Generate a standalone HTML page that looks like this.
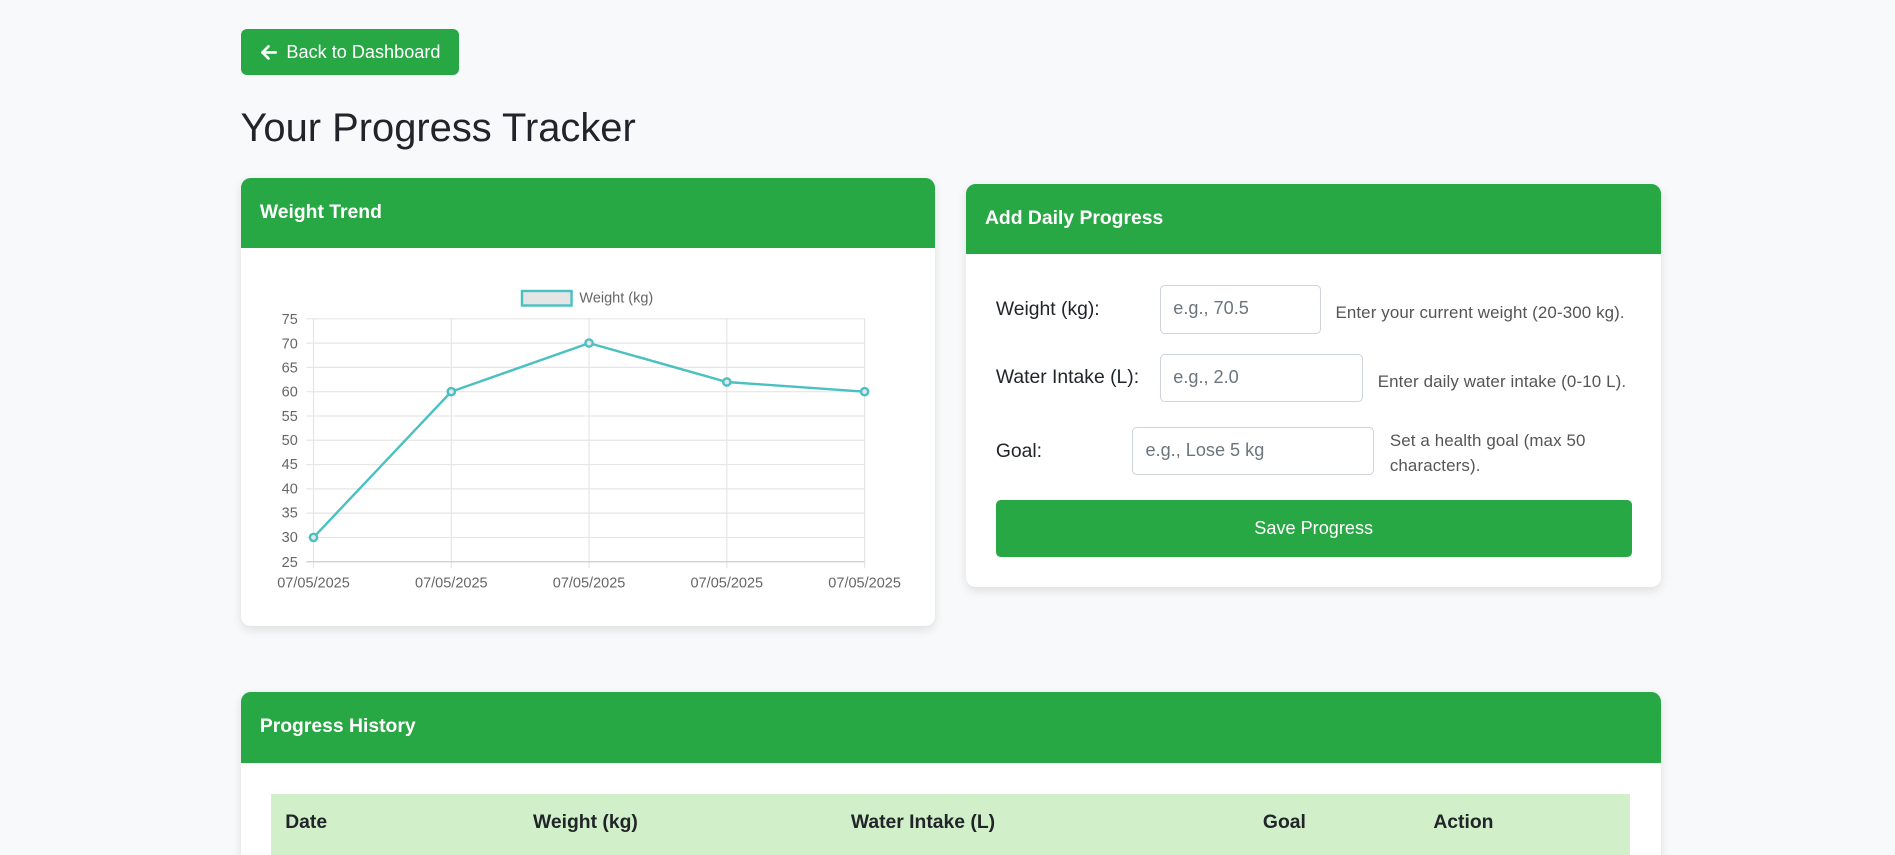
<!DOCTYPE html>
<html><head><meta charset="utf-8"><style>
html{margin:0;padding:0;overflow:hidden;height:855px;width:1895px;}
body{margin:0;padding:0;background:#f8f9fa;font-family:"Liberation Sans",Arial,sans-serif;color:#212529;width:1568px;height:707px;overflow:hidden;zoom:1.20855;position:relative;}
.abs{position:absolute;}
.btn{background:#28a745;color:#fff;border-radius:5px;}
.card{position:absolute;background:#fff;border-radius:8px;box-shadow:0 3px 8px rgba(0,0,0,.10);overflow:hidden;}
.ch{background:#28a745;color:#fff;font-weight:bold;font-size:16px;height:58px;line-height:58px;padding-left:16px;}
.lbl{position:absolute;font-size:16px;color:#212529;white-space:nowrap;}
.inp{position:absolute;border:1px solid #ced4da;border-radius:4px;background:#fff;box-sizing:border-box;font-size:15px;color:#6c757d;padding-left:10px;white-space:nowrap;}
.help{position:absolute;font-size:14px;color:#555;line-height:21px;white-space:nowrap;letter-spacing:0.1px;}
</style></head><body>
<div class="abs btn" style="left:199px;top:24px;width:181px;height:38px;">
<svg class="abs" style="left:16px;top:12px" width="14" height="14" viewBox="0 0 14 14"><path d="M13 7H2M7 2L2 7l5 5" stroke="#fff" stroke-width="2.2" fill="none" stroke-linecap="round" stroke-linejoin="round"/></svg>
<span class="abs" style="left:38px;top:11px;font-size:15px;white-space:nowrap;">Back to Dashboard</span></div>
<div class="abs" style="left:199px;top:88px;font-size:33px;white-space:nowrap;">Your Progress Tracker</div>

<div class="card" style="left:199px;top:147px;width:575px;height:371px;">
<div class="ch">Weight Trend</div>
<svg class="abs" style="left:0;top:0" width="575" height="371" font-family="Liberation Sans,Arial,sans-serif" font-size="12" fill="#666">
<g transform="translate(-199,-147)">
<rect x="431.5" y="240.5" width="41" height="12" fill="#e5e5e5" stroke="#4bc0c0" stroke-width="2"/>
<text x="479" y="250">Weight (kg)</text>
<g stroke="#e6e6e6" stroke-width="1">
<line x1="253" y1="263.5" x2="715" y2="263.5"/><line x1="253" y1="283.6" x2="715" y2="283.6"/><line x1="253" y1="303.7" x2="715" y2="303.7"/><line x1="253" y1="323.8" x2="715" y2="323.8"/><line x1="253" y1="343.9" x2="715" y2="343.9"/><line x1="253" y1="364" x2="715" y2="364"/><line x1="253" y1="384.1" x2="715" y2="384.1"/><line x1="253" y1="404.2" x2="715" y2="404.2"/><line x1="253" y1="424.3" x2="715" y2="424.3"/><line x1="253" y1="444.4" x2="715" y2="444.4"/>
<line x1="259" y1="263" x2="259" y2="470"/><line x1="373" y1="263" x2="373" y2="470"/><line x1="487" y1="263" x2="487" y2="470"/><line x1="601" y1="263" x2="601" y2="470"/><line x1="715" y1="263" x2="715" y2="470"/>
</g>
<line x1="253" y1="464.5" x2="715" y2="464.5" stroke="#ccc"/>
<g text-anchor="end"><text x="246" y="268">75</text><text x="246" y="288">70</text><text x="246" y="308">65</text><text x="246" y="328">60</text><text x="246" y="348">55</text><text x="246" y="368">50</text><text x="246" y="388">45</text><text x="246" y="408">40</text><text x="246" y="428">35</text><text x="246" y="448">30</text><text x="246" y="469">25</text></g>
<g text-anchor="middle"><text x="259" y="486">07/05/2025</text><text x="373" y="486">07/05/2025</text><text x="487" y="486">07/05/2025</text><text x="601" y="486">07/05/2025</text><text x="715" y="486">07/05/2025</text></g>
<polyline points="259,444.4 373,323.8 487,283.6 601,315.8 715,323.8" fill="none" stroke="#4bc0c0" stroke-width="2"/>
<g fill="#e5e5e5" stroke="#4bc0c0" stroke-width="2"><circle cx="259" cy="444.4" r="3"/><circle cx="373" cy="323.8" r="3"/><circle cx="487" cy="283.6" r="3"/><circle cx="601" cy="315.8" r="3"/><circle cx="715" cy="323.8" r="3"/></g>
</g></svg>
</div>

<div class="card" style="left:799px;top:152px;width:575px;height:334px;">
<div class="ch">Add Daily Progress</div>
<div style="position:absolute;left:-799px;top:-152px;width:1400px;height:600px;">
<div class="lbl" style="left:824px;top:247px;">Weight (kg):</div>
<div class="inp" style="left:960px;top:236px;width:133px;height:40px;line-height:38px;">e.g., 70.5</div>
<div class="help" style="left:1105px;top:248px;">Enter your current weight (20-300 kg).</div>
<div class="lbl" style="left:824px;top:304px;">Water Intake (L):</div>
<div class="inp" style="left:960px;top:293px;width:168px;height:40px;line-height:38px;">e.g., 2.0</div>
<div class="help" style="left:1140px;top:305px;">Enter daily water intake (0-10 L).</div>
<div class="lbl" style="left:824px;top:365px;">Goal:</div>
<div class="inp" style="left:937px;top:353px;width:200px;height:40px;line-height:38px;">e.g., Lose 5 kg</div>
<div class="help" style="left:1150px;top:354px;">Set a health goal (max 50<br>characters).</div>
<div class="abs btn" style="left:824px;top:414px;width:526px;height:47px;line-height:47px;text-align:center;font-size:15px;border-radius:4px;">Save Progress</div>
</div></div>

<div class="card" style="left:199px;top:573px;width:1175px;height:160px;border-bottom-left-radius:0;border-bottom-right-radius:0;">
<div class="ch">Progress History</div>
<div class="abs" style="left:25px;top:84px;width:1125px;height:60px;background:#d1f0c9;"></div>
<div class="abs" style="left:0;top:99px;width:1175px;font-weight:bold;font-size:16px;color:#212529;white-space:nowrap;">
<span class="abs" style="left:37px;">Date</span><span class="abs" style="left:242px;">Weight (kg)</span><span class="abs" style="left:505px;">Water Intake (L)</span><span class="abs" style="left:846px;">Goal</span><span class="abs" style="left:987px;">Action</span></div>
</div>
</body></html>
